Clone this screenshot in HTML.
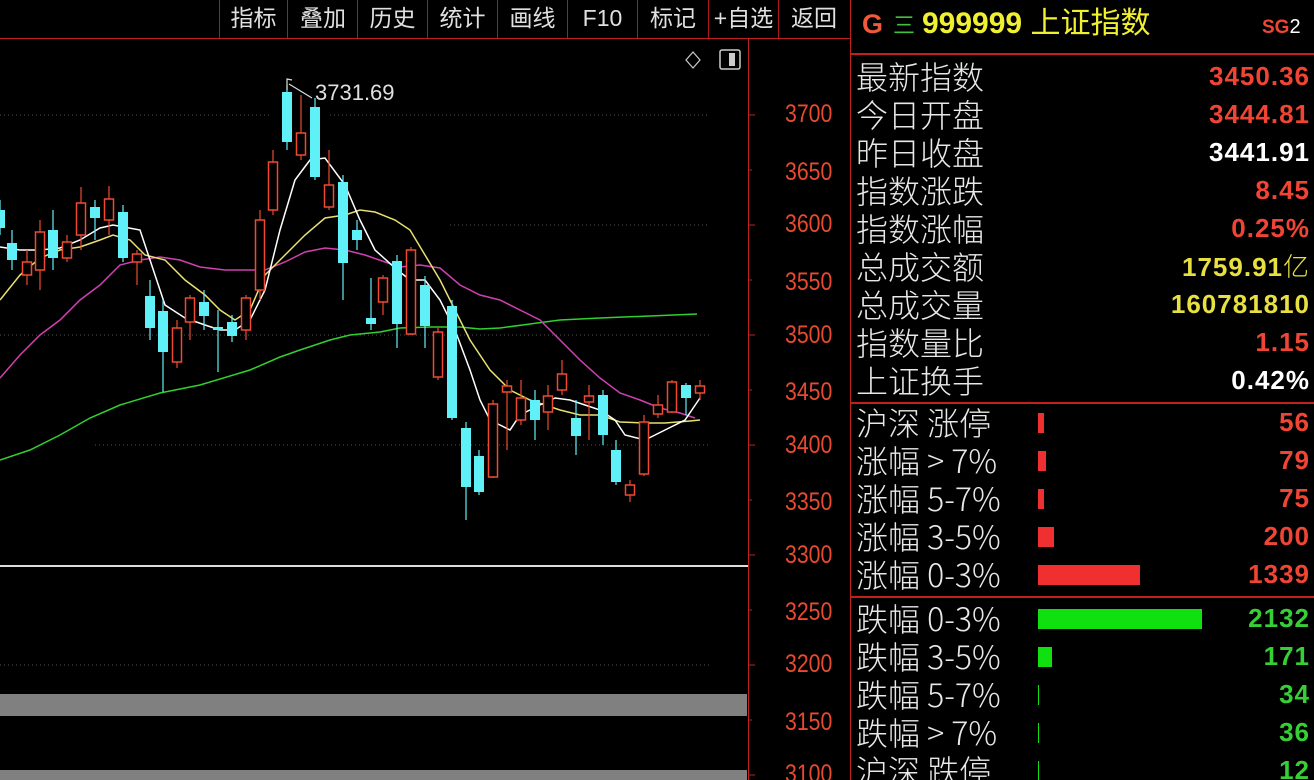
<!DOCTYPE html>
<html><head><meta charset="utf-8">
<style>
html,body{margin:0;padding:0;background:#000;width:1314px;height:780px;overflow:hidden;position:relative;font-family:"Liberation Sans","Noto Sans CJK SC",sans-serif}
.tb{position:absolute;top:0;height:38px;border-left:1px solid #b01818;color:#e0e0e0;font:23px "Liberation Sans","Noto Sans CJK SC",sans-serif;line-height:36px;text-align:center}
.lbl{position:absolute;left:856px;color:#e8e8e8;font:32px "Noto Sans CJK SC",sans-serif;font-weight:300;line-height:38px;white-space:pre}
.val{position:absolute;right:4px;font:bold 26px "Liberation Sans",sans-serif;line-height:38px;letter-spacing:1px}
.ax{position:absolute;left:785px;color:#e84a30;font:25px "Liberation Sans",sans-serif;transform:scaleX(0.85);transform-origin:left}
.bar{position:absolute;left:1038px;height:20px}
.r{color:#f04535}.w{color:#fff}.y{color:#e8e040}.g{color:#36d036}
</style></head><body>
<div style="position:absolute;left:0;top:38px;width:850px;height:1px;background:#c02020"></div>
<div class="tb" style="left:219px;width:67px">指标</div>
<div class="tb" style="left:287px;width:70px">叠加</div>
<div class="tb" style="left:357px;width:69px">历史</div>
<div class="tb" style="left:427px;width:69px">统计</div>
<div class="tb" style="left:497px;width:69px">画线</div>
<div class="tb" style="left:567px;width:69px">F10</div>
<div class="tb" style="left:637px;width:70px">标记</div>
<div class="tb" style="left:708px;width:69px">+自选</div>
<div class="tb" style="left:778px;width:70px">返回</div>
<div style="position:absolute;left:748px;top:38px;width:1px;height:742px;background:#c02020"></div>
<div style="position:absolute;left:850px;top:0;width:1px;height:780px;background:#c02020"></div>
<div class="ax" style="top:100px">3700</div>
<div class="ax" style="top:158px">3650</div>
<div class="ax" style="top:210px">3600</div>
<div class="ax" style="top:268px">3550</div>
<div class="ax" style="top:321px">3500</div>
<div class="ax" style="top:378px">3450</div>
<div class="ax" style="top:431px">3400</div>
<div class="ax" style="top:488px">3350</div>
<div class="ax" style="top:541px">3300</div>
<div class="ax" style="top:598px">3250</div>
<div class="ax" style="top:650px">3200</div>
<div class="ax" style="top:708px">3150</div>
<div class="ax" style="top:760px">3100</div>
<svg id="ch" width="850" height="780" style="position:absolute;left:0;top:0">
<g stroke="#c02020" stroke-width="1">
<line x1="748" y1="115" x2="755" y2="115"/><line x1="748" y1="170" x2="752" y2="170"/><line x1="748" y1="225" x2="755" y2="225"/><line x1="748" y1="280" x2="752" y2="280"/><line x1="748" y1="335" x2="755" y2="335"/><line x1="748" y1="390" x2="752" y2="390"/><line x1="748" y1="445" x2="755" y2="445"/><line x1="748" y1="500" x2="752" y2="500"/><line x1="748" y1="555" x2="755" y2="555"/><line x1="748" y1="610" x2="752" y2="610"/><line x1="748" y1="665" x2="755" y2="665"/><line x1="748" y1="720" x2="752" y2="720"/><line x1="748" y1="775" x2="755" y2="775"/>
</g>
<g stroke="#555" stroke-dasharray="1 3" stroke-width="1">
<line x1="0" y1="115" x2="270" y2="115"/><line x1="330" y1="115" x2="710" y2="115"/>
<line x1="450" y1="225" x2="710" y2="225"/>
<line x1="0" y1="335" x2="710" y2="335"/>
<line x1="95" y1="445" x2="710" y2="445"/>
<line x1="0" y1="665" x2="710" y2="665"/>
</g>
<rect x="0" y="565" width="748" height="2" fill="#ddd"/>
<rect x="0" y="694" width="747" height="22" fill="#808080"/>
<rect x="0" y="770" width="747" height="10" fill="#808080"/>
<path d="M693 52 L700 60 L693 68 L686 60 Z" fill="none" stroke="#ccc" stroke-width="1.2"/>
<rect x="720" y="50" width="20" height="19" rx="2" fill="none" stroke="#ccc" stroke-width="1.5"/>
<rect x="729" y="53" width="6" height="13" fill="#ccc"/>
<g id="ma" fill="none" stroke-width="1.5"></g>
<g id="cd"></g>
<path d="M287 90 L287 79 L292 80 M289 84 L312 98" stroke="#ddd" fill="none" stroke-width="1.2"/>
<text x="315" y="100" fill="#e0e0e0" font-family="Liberation Sans" font-size="22">3731.69</text>
</svg>
<div style="position:absolute;left:862px;top:4px;font:bold 27px 'Liberation Sans';color:#f05a3a;line-height:40px">G</div>
<div style="position:absolute;left:893px;top:4px;font:22px 'Noto Sans CJK SC';color:#40c040;line-height:40px">三</div>
<div style="position:absolute;left:922px;top:2px;font:30px 'Liberation Sans','Noto Sans CJK SC',sans-serif;color:#f0f030;line-height:44px"><b>999999</b> 上证指数</div>
<div style="position:absolute;left:1262px;top:12px;font:20px 'Liberation Sans';line-height:30px"><b class="r" style="font-size:19px">SG</b><span class="w">2</span></div>
<div style="position:absolute;left:851px;top:53px;width:463px;height:2px;background:#c02020"></div>
<div style="position:absolute;left:851px;top:402px;width:463px;height:2px;background:#c02020"></div>
<div style="position:absolute;left:851px;top:596px;width:463px;height:2px;background:#c02020"></div>

<div class="lbl" style="top:57px">最新指数</div><div class="val r" style="top:57px">3450.36</div>
<div class="lbl" style="top:95px">今日开盘</div><div class="val r" style="top:95px">3444.81</div>
<div class="lbl" style="top:133px">昨日收盘</div><div class="val w" style="top:133px">3441.91</div>
<div class="lbl" style="top:171px">指数涨跌</div><div class="val r" style="top:171px">8.45</div>
<div class="lbl" style="top:209px">指数涨幅</div><div class="val r" style="top:209px">0.25%</div>
<div class="lbl" style="top:247px">总成交额</div><div class="val y" style="top:247px">1759.91<span style="font-weight:300;font-family:'Noto Sans CJK SC'">亿</span></div>
<div class="lbl" style="top:285px">总成交量</div><div class="val y" style="top:285px">160781810</div>
<div class="lbl" style="top:323px">指数量比</div><div class="val r" style="top:323px">1.15</div>
<div class="lbl" style="top:361px">上证换手</div><div class="val w" style="top:361px">0.42%</div>

<div class="lbl" style="top:403px">沪深 涨停</div><div class="bar" style="top:413px;width:6px;background:#f03030"></div><div class="val r" style="top:403px">56</div>
<div class="lbl" style="top:441px">涨幅 &gt; 7%</div><div class="bar" style="top:451px;width:8px;background:#f03030"></div><div class="val r" style="top:441px">79</div>
<div class="lbl" style="top:479px">涨幅 5-7%</div><div class="bar" style="top:489px;width:6px;background:#f03030"></div><div class="val r" style="top:479px">75</div>
<div class="lbl" style="top:517px">涨幅 3-5%</div><div class="bar" style="top:527px;width:16px;background:#f03030"></div><div class="val r" style="top:517px">200</div>
<div class="lbl" style="top:555px">涨幅 0-3%</div><div class="bar" style="top:565px;width:102px;background:#f03030"></div><div class="val r" style="top:555px">1339</div>

<div class="lbl" style="top:599px">跌幅 0-3%</div><div class="bar" style="top:609px;width:164px;background:#10e010"></div><div class="val g" style="top:599px">2132</div>
<div class="lbl" style="top:637px">跌幅 3-5%</div><div class="bar" style="top:647px;width:14px;background:#10e010"></div><div class="val g" style="top:637px">171</div>
<div class="lbl" style="top:675px">跌幅 5-7%</div><div class="bar" style="top:685px;width:1px;background:#10e010"></div><div class="val g" style="top:675px">34</div>
<div class="lbl" style="top:713px">跌幅 &gt; 7%</div><div class="bar" style="top:723px;width:1px;background:#10e010"></div><div class="val g" style="top:713px">36</div>
<div class="lbl" style="top:751px">沪深 跌停</div><div class="bar" style="top:761px;width:1px;background:#10e010"></div><div class="val g" style="top:751px">12</div>

<script>
var ns="http://www.w3.org/2000/svg";
function el(p,t,a){var e=document.createElementNS(ns,t);for(var k in a)e.setAttribute(k,a[k]);p.appendChild(e);return e;}
var ma=document.getElementById('ma'),cd=document.getElementById('cd');
var lines=[
["#30d030",[[0,460],[30,450],[60,435],[90,418],[120,405],[160,393],[200,385],[250,370],[280,357],[300,350],[330,340],[350,335],[380,332],[400,328],[430,327],[460,327],[480,329],[500,328],[530,324],[560,320],[600,318],[650,316],[697,314]]],
["#d040b0",[[0,378],[20,355],[40,335],[60,320],[80,300],[100,285],[120,265],[140,260],[160,257],[180,260],[200,267],[225,270],[250,270],[265,270],[285,262],[305,252],[325,248],[345,250],[365,255],[385,262],[400,267],[420,265],[440,268],[460,285],[480,295],[500,300],[520,310],[540,320],[560,340],[580,360],[600,378],[620,393],[640,400],[660,408],[680,413],[695,418]]],
["#e8e070",[[0,300],[20,275],[40,258],[60,250],[80,247],[100,240],[113,235],[130,240],[145,255],[165,260],[185,280],[205,295],[220,310],[235,320],[250,310],[265,275],[285,255],[305,235],[325,218],[345,215],[360,210],[375,212],[395,220],[410,230],[425,255],[440,280],[455,310],[470,340],[490,370],[510,390],[530,400],[545,405],[560,410],[580,415],[600,415],[620,422],[645,423],[665,423],[690,421],[700,420]]],
["#ffffff",[[0,247],[20,250],[40,250],[60,248],[80,240],[100,228],[113,225],[140,230],[150,260],[165,305],[185,318],[205,325],[220,330],[235,330],[250,320],[265,290],[280,230],[295,180],[310,160],[325,158],[345,185],[360,220],[375,250],[395,268],[410,280],[425,280],[440,300],[455,330],[470,370],[480,400],[490,420],[500,425],[510,430],[520,415],[540,405],[555,398],[570,400],[585,405],[600,410],[615,420],[625,435],[645,440],[665,430],[685,420],[700,398]]]];
lines.forEach(function(l){el(ma,'polyline',{points:l[1].map(function(p){return p.join(',')}).join(' '),stroke:l[0]});});
var C=[[0,210,228,200,235,0],[12,243,260,230,270,0],[27,262,275,250,285,1],[40,232,270,220,290,1],[53,230,258,210,270,0],[67,242,258,235,262,1],[81,203,235,187,250,1],[95,207,218,200,240,0],[109,199,220,186,235,1],[123,212,258,205,262,0],[137,254,262,250,285,1],[150,296,328,280,340,0],[163,311,352,300,392,0],[177,328,362,320,368,1],[190,298,322,295,340,1],[204,302,316,290,330,0],[218,327,330,310,372,0],[232,322,336,315,342,0],[246,298,330,295,340,1],[260,220,290,210,300,1],[273,162,210,150,215,1],[287,92,142,85,150,0],[301,133,155,95,160,1],[315,107,177,98,180,0],[329,185,207,150,210,1],[343,182,263,175,300,0],[357,230,240,220,250,0],[371,318,324,278,330,0],[383,278,302,275,315,1],[397,261,324,255,348,0],[411,250,334,247,335,1],[425,285,326,276,348,0],[438,332,377,328,380,1],[452,306,418,300,420,0],[466,428,487,422,520,0],[479,456,492,450,495,0],[493,404,477,400,478,1],[507,386,392,380,450,1],[521,398,420,380,425,1],[535,400,420,390,440,0],[548,396,412,385,430,1],[562,374,390,360,395,1],[576,418,436,400,455,0],[589,396,402,385,440,1],[603,395,435,390,445,0],[616,450,482,440,485,0],[630,485,495,480,502,1],[644,422,474,415,476,1],[658,405,414,395,418,1],[672,382,412,380,413,1],[686,385,398,383,415,0],[700,386,393,380,400,1]];
C.forEach(function(c){var x=c[0],col=c[5]?"#f04a30":"#60f0f8";
el(cd,'line',{x1:x,y1:c[3],x2:x,y2:c[4],stroke:col,'stroke-width':1.2});
if(c[5])el(cd,'rect',{x:x-4.5,y:c[1],width:9,height:Math.max(2,c[2]-c[1]),fill:'#000',stroke:col,'stroke-width':1.5});
else el(cd,'rect',{x:x-5,y:c[1],width:10,height:Math.max(2,c[2]-c[1]),fill:col});});
</script>
</body></html>
